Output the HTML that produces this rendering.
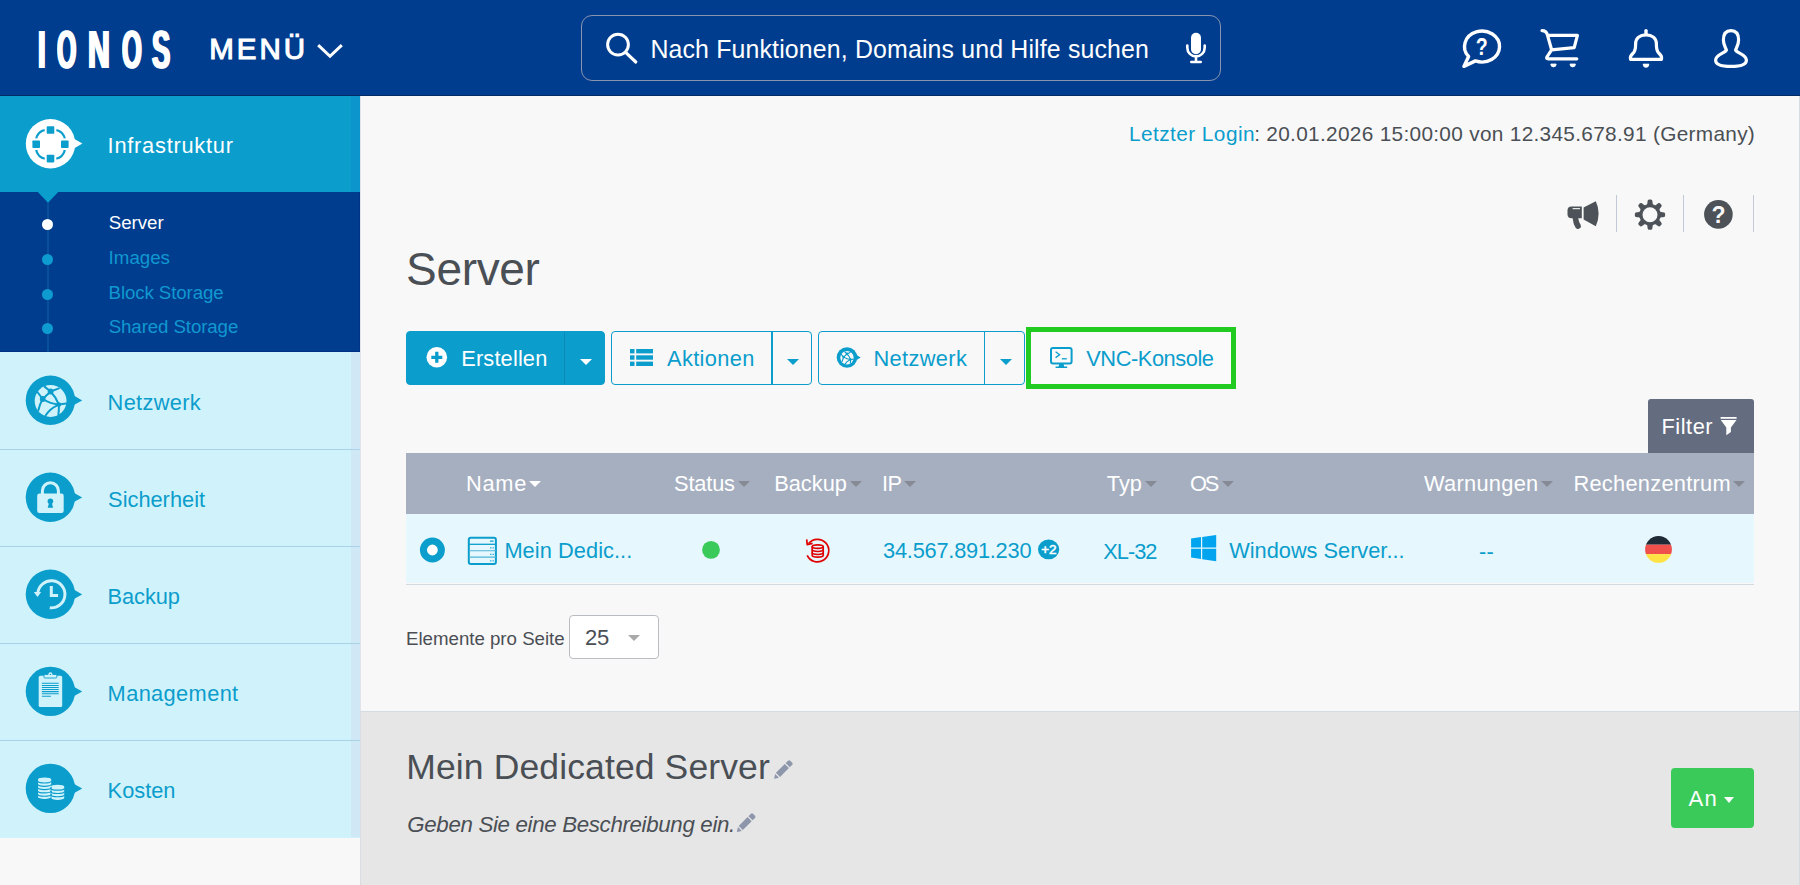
<!DOCTYPE html>
<html lang="de"><head><meta charset="utf-8"><title>IONOS Cloud Panel – Server</title>
<style>
*{box-sizing:border-box;margin:0;padding:0}
html,body{width:1800px;height:885px;overflow:hidden;background:#f8f8f8;font-family:"Liberation Sans",sans-serif}
.abs{position:absolute}
.t{position:absolute;white-space:nowrap;line-height:1;font-family:"Liberation Sans",sans-serif}
svg{position:absolute;overflow:visible}
#hdr{position:absolute;left:0;top:0;width:1800px;height:96px;background:#003d8f;border-bottom:1px solid #002a66}
#search{position:absolute;left:581px;top:15px;width:640px;height:66px;border:1px solid #8994b0;border-radius:11px}
#side{position:absolute;left:0;top:96px;width:360px;height:742px;background:#d0f3fb}
#side .strip{position:absolute;left:351px;top:0;width:9px;height:741px;background:#d0e8f6}
#act{position:absolute;left:0;top:0;width:360px;height:96px;background:#0b9dcc}
#act .st{position:absolute;left:351px;top:0;width:9px;height:96px;background:#0c94cc}
#sub{position:absolute;left:0;top:96px;width:360px;height:160px;background:#003d8f;border-bottom:1px solid #002f86;border-right:1px solid #00338a}
#sub .ln{position:absolute;left:47px;top:8px;width:2px;height:152px;background:#08509a}
#sub .dot{position:absolute;left:42px;width:11px;height:11px;border-radius:50%;background:#0e9bd0}
.sep{position:absolute;left:0;width:360px;height:1px;background:#a9d1e8}
#main{position:absolute;left:360px;top:96px;width:1440px;height:789px;background:#f8f8f8;border-left:1px solid #e0e3e7}
#redge{position:absolute;left:1799px;top:96px;width:1px;height:789px;background:#d5dbe0}
.vsep{position:absolute;top:195px;width:1px;height:37px;background:#c2cad8}
.btn{position:absolute;top:331px;height:54px;border:1.5px solid #0b9dcc;border-radius:4px}
#bt1{left:406px;width:199px;background:#0b9dcc}
#bt1 i{position:absolute;left:157px;top:0;bottom:0;width:1px;background:#0a8ab5}
#bt2{left:611px;width:201px}
#bt2 i{position:absolute;left:159px;top:0;bottom:0;width:2px;background:#0b9dcc}
#bt3{left:818px;width:207px}
#bt3 i{position:absolute;left:165px;top:0;bottom:0;width:1px;background:#0b9dcc}
#vnc{position:absolute;left:1026px;top:327px;width:210px;height:62px;border:5px solid #22cb22;background:#fafafa}
.car{position:absolute;width:0;height:0;border-left:6px solid transparent;border-right:6px solid transparent;border-top:6px solid #0b9dcc}
#filter{position:absolute;left:1648px;top:399px;width:106px;height:54px;background:#646c80;border-radius:3px 3px 0 0}
#thead{position:absolute;left:406px;top:453px;width:1348px;height:61px;background:#a6afc0}
#trow{position:absolute;left:406px;top:514px;width:1348px;height:69px;background:#e6f8fd}
#trowl{position:absolute;left:406px;top:584px;width:1348px;height:1px;background:#d3d9e0}
.hc{position:absolute;top:480.8px;width:0;height:0;border-left:6.4px solid transparent;border-right:6.4px solid transparent;border-top:6.8px solid #858a94}
#sel{position:absolute;left:569px;top:615px;width:90px;height:44px;background:#fff;border:1px solid #b9bcc1;border-radius:4px}
#detail{position:absolute;left:360px;top:711px;width:1439px;border-left:1px solid #d9dde2;height:174px;background:#e6e6e6;border-top:1.5px solid #d3dbe3}
#anb{position:absolute;left:1671px;top:768px;width:83px;height:60px;background:#3aca5a;border-radius:4px}
#logo{position:absolute;left:0;top:22.5px;height:54px;width:200px;font-family:"Liberation Sans",sans-serif;font-weight:bold;font-size:54.5px;line-height:1;color:#fff}
#logo span{position:absolute;top:0;transform-origin:0 0;text-shadow:2px 0 #fff,-2px 0 #fff}

</style></head>
<body>
<main id="main"></main>
<div id="redge"></div>
<header id="hdr">
  <div id="search"></div>
</header>
<div id="logo"><span style="left:38px;transform:scaleX(.5)">I</span><span style="left:57px;transform:scaleX(.455)">O</span><span style="left:88px;transform:scaleX(.555)">N</span><span style="left:121.5px;transform:scaleX(.466)">O</span><span style="left:151.5px;transform:scaleX(.5)">S</span></div>

<nav id="side">
  <div class="strip"></div>
  <div id="act"><div class="st"></div></div>
  <div id="sub">
    <div class="ln"></div>
    <div class="dot" style="top:27px;background:#fff"></div>
    <div class="dot" style="top:62px"></div>
    <div class="dot" style="top:96.5px"></div>
    <div class="dot" style="top:130.5px"></div>
  </div>
  <div class="sep" style="top:353px"></div>
  <div class="sep" style="top:450px"></div>
  <div class="sep" style="top:547px"></div>
  <div class="sep" style="top:644px"></div>
</nav>

<div class="vsep" style="left:1616px"></div>
<div class="vsep" style="left:1683px"></div>
<div class="vsep" style="left:1753px"></div>

<div class="btn" id="bt1"><i></i></div>
<div class="btn" id="bt2"><i></i></div>
<div class="btn" id="bt3"><i></i></div>
<div id="vnc"></div>
<div class="car" style="left:580px;top:358.5px;border-top-color:#fff"></div>
<div class="car" style="left:787px;top:358.5px"></div>
<div class="car" style="left:1000px;top:358.5px"></div>

<div id="filter"></div>
<div id="thead"></div>
<div id="trow"></div><div id="trowl"></div>
<div class="hc" style="left:529.3px;border-top-color:#fff"></div>
<div class="hc" style="left:738.1px"></div>
<div class="hc" style="left:849.6px"></div>
<div class="hc" style="left:904.4px"></div>
<div class="hc" style="left:1144.8px"></div>
<div class="hc" style="left:1221.8px"></div>
<div class="hc" style="left:1540.6px"></div>
<div class="hc" style="left:1732.9px"></div>

<div id="sel"></div>
<div class="hc" style="left:627.9px;top:634.5px;border-top-color:#a9a9a9"></div>
<div id="detail"></div>
<div id="anb"></div>
<div class="hc" style="left:1723.7px;top:797.1px;border-top-color:#fff;border-top-width:6px;border-left-width:5.9px;border-right-width:5.9px"></div>
<svg id="ico" width="1800" height="885" viewBox="0 0 1800 885" style="left:0;top:0">
<!-- header: chevron -->
<polyline points="318.2,45.2 330,56.3 341.8,45.2" fill="none" stroke="#fff" stroke-width="3"/>
<!-- search -->
<circle cx="618" cy="44.6" r="10.4" fill="none" stroke="#fff" stroke-width="3"/>
<line x1="625.6" y1="52.4" x2="635.8" y2="62" stroke="#fff" stroke-width="3.2" stroke-linecap="round"/>
<!-- mic -->
<rect x="1191" y="32.8" width="10" height="21.5" rx="5" fill="#fff"/>
<path d="M1187.3 45.5v2.2a8.7 8.7 0 0 0 17.4 0v-2.2" fill="none" stroke="#fff" stroke-width="2.6" stroke-linecap="round"/>
<line x1="1196" y1="56" x2="1196" y2="61.5" stroke="#fff" stroke-width="2.6"/>
<line x1="1191.3" y1="62" x2="1200.7" y2="62" stroke="#fff" stroke-width="2.6" stroke-linecap="round"/>
<!-- help bubble -->
<path d="M1475.4 60.9A17.5 15.5 0 1 0 1468.6 56.5L1463.9 66.4Z" fill="none" stroke="#fff" stroke-width="3.4" stroke-linejoin="round"/>
<text transform="translate(1481.800 55.300) scale(.8 1)" text-anchor="middle" font-family="Liberation Sans, sans-serif" font-weight="bold" font-size="24.500" fill="#fff">?</text>
<!-- cart -->
<g fill="none" stroke="#fff" stroke-width="3.2" stroke-linecap="round" stroke-linejoin="round">
<path d="M1542 30.6C1545.2 30.6 1546.6 31.8 1547.4 34.8L1551.6 49.7"/>
<path d="M1548 35.3L1577.4 35.3L1574.2 47.6L1551.6 49.8L1546.9 57Q1546 58.8 1548.2 58.8L1576.8 58.8"/>
</g>
<path d="M1550.8 64a2.7 2.9 0 0 0 5.4 0z" fill="#fff" stroke="#fff" stroke-width=".8"/>
<path d="M1570 64a2.7 2.9 0 0 0 5.4 0z" fill="#fff" stroke="#fff" stroke-width=".8"/>
<!-- bell -->
<line x1="1646" y1="30.6" x2="1646" y2="34" stroke="#fff" stroke-width="3.4" stroke-linecap="round"/>
<path d="M1630.6 59.4L1661.4 59.4Q1662.4 56.4 1659 53.3C1656.2 50.6 1656.4 48 1656.4 44C1656.4 38 1652 34.8 1646 34.8C1640 34.8 1635.6 38 1635.6 44C1635.6 48 1635.8 50.6 1633 53.3Q1629.6 56.4 1630.6 59.4Z" fill="none" stroke="#fff" stroke-width="3.2" stroke-linejoin="round"/>
<path d="M1643 64a3 3.4 0 0 0 6 0z" fill="#fff" stroke="#fff" stroke-width=".6"/>
<!-- user -->
<path d="M1726.4 50.2C1725 53 1715.600 54.400 1715.600 60.200C1715.600 64.300 1722 66.400 1731 66.400C1740 66.400 1746.400 64.300 1746.400 60.200C1746.400 54.400 1737 53 1735.600 50.200C1736.200 47.600 1738.600 45 1738.600 40C1738.600 33.800 1735.600 30.600 1731 30.600C1726.400 30.600 1723.400 33.800 1723.400 40C1723.400 45 1725.800 47.600 1726.400 50.200Z" fill="none" stroke="#fff" stroke-width="3.2" stroke-linejoin="round"/>
</svg>
<svg id="ico2" width="1800" height="885" viewBox="0 0 1800 885" style="left:0;top:0">
<!-- Infrastruktur icon -->
<circle cx="50.5" cy="143.7" r="24.7" fill="#fff"/>
<polygon points="73.5,138.6 82.4,143.6 73.5,148.8" fill="#fff"/>
<rect x="36.2" y="130" width="28.6" height="28.6" rx="10" fill="none" stroke="#0b9dcc" stroke-width="2.1"/>
<g fill="#fff"><rect x="44.7" y="124.2" width="11.600" height="11.600"/><rect x="44.7" y="152.800" width="11.600" height="11.600"/><rect x="30.4" y="138.400" width="11.600" height="11.600"/><rect x="59" y="138.400" width="11.600" height="11.600"/></g>
<g fill="#0b9dcc"><rect x="46.7" y="126.2" width="7.6" height="7.6" rx=".8"/><rect x="46.7" y="154.8" width="7.6" height="7.6" rx=".8"/><rect x="32.4" y="140.4" width="7.6" height="7.6" rx=".8"/><rect x="61" y="140.4" width="7.6" height="7.6" rx=".8"/></g>
<!-- submenu pointer -->
<polygon points="37.800,192 58.200,192 48,202.800" fill="#0b9dcc"/>
<!-- Netzwerk icon -->
<g transform="translate(50.4 400.2)">
<circle r="24.7" fill="#0b9dcc"/><polygon points="23.4,-4.6 31.8,0.2 23.4,4.8" fill="#0b9dcc"/>
<circle cx=".2" cy=".8" r="15.9" fill="#d0f3fb"/>
<g fill="none" stroke="#0b9dcc" stroke-width="2" stroke-linecap="round">
<path d="M.2 -8.7L-7.7 -1.2"/><path d="M.2 -8.7L-5.6 -13.3"/><path d="M-7.7 -1.2L-13 -8.2"/><path d="M.2 -8.7L8.5 -11.8"/>
<path d="M-7.7 -1.2Q0 3.6 8.5 4.4"/><path d="M.2 -8.7Q5.6 -3 8.5 4.4"/><path d="M8.5 4.4L15.8 3.4"/><path d="M8.5 4.4Q8.6 10 8 14.4"/>
<path d="M-7.7 -1.2Q-11 4.6 -12 10"/><path d="M-5 15.6Q-.6 8.6 6.4 5.4"/>
</g>
<g fill="#0b9dcc"><circle cx=".2" cy="-8.7" r="2.9"/><circle cx="-7.7" cy="-1.2" r="2.9"/><circle cx="8.5" cy="4.4" r="2.3"/></g>
</g>
<!-- Sicherheit icon -->
<g transform="translate(50.4 497.3)">
<circle r="24.7" fill="#0b9dcc"/><polygon points="23.4,-4.6 31.8,0.2 23.4,4.8" fill="#0b9dcc"/>
<path d="M-8 -3.2v-3.3a8 8 0 0 1 16 0v3.3" fill="none" stroke="#d0f3fb" stroke-width="3"/>
<rect x="-13.2" y="-3.7" width="26.5" height="19.4" rx="2.2" fill="#d0f3fb"/>
<circle cx="0" cy="4" r="2.8" fill="#0b9dcc"/><polygon points="-1.2,5 1.2,5 2.7,10.4 -2.7,10.4" fill="#0b9dcc"/>
</g>
<!-- Backup icon -->
<g transform="translate(50.4 594.2)">
<circle r="24.7" fill="#0b9dcc"/><polygon points="23.4,-4.6 31.8,0.2 23.4,4.8" fill="#0b9dcc"/>
<path d="M-12.6 -1.2A13.6 13.6 0 1 1 -.6 13.6" fill="none" stroke="#d0f3fb" stroke-width="2.9"/>
<polygon points="-16.6,-2.2 -9.2,-2.2 -12.9,2.8" fill="#d0f3fb"/>
<path d="M.9 -8.3V1.2H7.7" fill="none" stroke="#d0f3fb" stroke-width="3"/>
</g>
<!-- Management icon -->
<g transform="translate(50.4 691.4)">
<circle r="24.7" fill="#0b9dcc"/><polygon points="23.4,-4.6 31.8,0.2 23.4,4.8" fill="#0b9dcc"/>
<rect x="-11.7" y="-15.6" width="23.5" height="31.2" rx="1.6" fill="#d0f3fb"/>
<rect x="-6.4" y="-17" width="12.8" height="3.6" rx=".8" fill="#d0f3fb" stroke="#0b9dcc" stroke-width=".9"/>
<circle cx="0" cy="-17.2" r="2" fill="#d0f3fb"/><circle cx="0" cy="-17" r=".7" fill="#0b9dcc"/>
<g stroke="#0b9dcc" stroke-width="1.05"><path d="M-8.5 -8.1h16.8M-8.5 -6h16.8M-8.5 -3.9h16.8M-8.5 -1.9h16.8M-8.5 .2h16.8M-8.5 2.3h16.8M-8.5 4.8h9"/></g>
</g>
<!-- Kosten icon -->
<g transform="translate(50.4 788.4)">
<circle r="24.7" fill="#0b9dcc"/><polygon points="23.4,-4.6 31.8,0.2 23.4,4.8" fill="#0b9dcc"/>
<g fill="#d0f3fb">
<path d="M-12.4 -9v17.6a6.6 1.9 0 0 0 13.2 0V-9z"/><ellipse cx="-5.8" cy="-9" rx="6.6" ry="1.9"/>
<path d="M.6 -1.8v11.4a6.6 1.9 0 0 0 13.2 0V-1.8z"/><ellipse cx="7.2" cy="-1.8" rx="6.6" ry="1.9"/>
</g>
<g fill="none" stroke="#0b9dcc" stroke-width="1.15">
<path d="M-12.6 -7.4a6.8 2 0 0 0 13.6 0M-12.6 -4.1a6.8 2 0 0 0 13.6 0M-12.6 -.8a6.8 2 0 0 0 13.6 0M-12.6 2.5a6.8 2 0 0 0 13.6 0M-12.6 5.8a6.8 2 0 0 0 13.6 0"/>
<path d="M.4 -.2a6.8 2 0 0 0 13.6 0M.4 3.1a6.8 2 0 0 0 13.6 0M.4 6.4a6.8 2 0 0 0 13.6 0"/>
<path d="M.6 -1.8V11" stroke-width=".9"/>
</g>
</g>
</svg>
<svg id="ico3" width="1800" height="885" viewBox="0 0 1800 885" style="left:0;top:0">
<!-- megaphone -->
<g fill="#4c5257">
<path d="M1571.5 206.6h10.3v11.6h-10.3a4 4 0 0 1-4-4v-3.6a4 4 0 0 1 4-4z"/>
<path d="M1583.6 207.4L1595.8 201.3Q1598.6 207 1598.6 213.6Q1598.6 220.5 1595.8 226.2L1583.6 219.6Z"/>
<path d="M1572.6 218h5.6q.6 4.200 2.300 6.600q1.200 2.300-.7 3.700q-2.200 1.500-4-.3q-2.600-3.800-3.200-10z"/>
</g>
<rect x="1572.600" y="208.100" width="7.400" height="1.100" fill="#f8f8f8"/>
<!-- gear -->
<path d="M1665.15 214.70L1665.13 215.29L1665.05 215.88L1664.83 216.45L1664.16 216.94L1662.65 217.22L1661.14 217.37L1660.46 217.65L1660.18 218.01L1660.00 218.39L1659.84 218.78L1659.68 219.16L1659.54 219.56L1659.48 220.01L1659.77 220.69L1660.73 221.87L1661.60 223.13L1661.73 223.94L1661.48 224.50L1661.12 224.98L1660.71 225.41L1660.28 225.82L1659.80 226.18L1659.24 226.43L1658.43 226.30L1657.17 225.43L1655.99 224.47L1655.31 224.18L1654.86 224.24L1654.46 224.38L1654.08 224.54L1653.69 224.70L1653.31 224.88L1652.95 225.16L1652.67 225.84L1652.52 227.35L1652.24 228.86L1651.75 229.53L1651.18 229.75L1650.59 229.83L1650.00 229.85L1649.41 229.83L1648.82 229.75L1648.25 229.53L1647.76 228.86L1647.48 227.35L1647.33 225.84L1647.05 225.16L1646.69 224.88L1646.31 224.70L1645.92 224.54L1645.54 224.38L1645.14 224.24L1644.69 224.18L1644.01 224.47L1642.83 225.43L1641.57 226.30L1640.76 226.43L1640.20 226.18L1639.72 225.82L1639.29 225.41L1638.88 224.98L1638.52 224.50L1638.27 223.94L1638.40 223.13L1639.27 221.87L1640.23 220.69L1640.52 220.01L1640.46 219.56L1640.32 219.16L1640.16 218.78L1640.00 218.39L1639.82 218.01L1639.54 217.65L1638.86 217.37L1637.35 217.22L1635.84 216.94L1635.17 216.45L1634.95 215.88L1634.87 215.29L1634.85 214.70L1634.87 214.11L1634.95 213.52L1635.17 212.95L1635.84 212.46L1637.35 212.18L1638.86 212.03L1639.54 211.75L1639.82 211.39L1640.00 211.01L1640.16 210.62L1640.32 210.24L1640.46 209.84L1640.52 209.39L1640.23 208.71L1639.27 207.53L1638.40 206.27L1638.27 205.46L1638.52 204.90L1638.88 204.42L1639.29 203.99L1639.72 203.58L1640.20 203.22L1640.76 202.97L1641.57 203.10L1642.83 203.97L1644.01 204.93L1644.69 205.22L1645.14 205.16L1645.54 205.02L1645.92 204.86L1646.31 204.70L1646.69 204.52L1647.05 204.24L1647.33 203.56L1647.48 202.05L1647.76 200.54L1648.25 199.87L1648.82 199.65L1649.41 199.57L1650.00 199.55L1650.59 199.57L1651.18 199.65L1651.75 199.87L1652.24 200.54L1652.52 202.05L1652.67 203.56L1652.95 204.24L1653.31 204.52L1653.69 204.70L1654.08 204.86L1654.46 205.02L1654.86 205.16L1655.31 205.22L1655.99 204.93L1657.17 203.97L1658.43 203.10L1659.24 202.97L1659.80 203.22L1660.28 203.58L1660.71 203.99L1661.12 204.42L1661.48 204.90L1661.73 205.46L1661.60 206.27L1660.73 207.53L1659.77 208.71L1659.48 209.39L1659.54 209.84L1659.68 210.24L1659.84 210.62L1660.00 211.01L1660.18 211.39L1660.46 211.75L1661.14 212.03L1662.65 212.18L1664.16 212.46L1664.83 212.95L1665.05 213.52L1665.13 214.11Z" fill="#4c5257"/>
<circle cx="1650" cy="214.700" r="7.500" fill="#f8f8f8"/>
<!-- help -->
<circle cx="1718.400" cy="214.400" r="14.300" fill="#4c5257"/>
<text x="1718.600" y="222.600" text-anchor="middle" font-family="Liberation Sans, sans-serif" font-weight="bold" font-size="23" fill="#f8f8f8">?</text>
<!-- plus -->
<circle cx="436.800" cy="357.300" r="10.300" fill="#fff"/>
<path d="M431.300 357.300h11M436.800 351.800v11" stroke="#0b9dcc" stroke-width="3.300"/>
<!-- list -->
<g fill="#0b9dcc"><rect x="630" y="349" width="4.500" height="4.400"/><rect x="636.200" y="349" width="16.800" height="4.400"/><rect x="630" y="355.300" width="4.500" height="4.400"/><rect x="636.200" y="355.300" width="16.800" height="4.400"/><rect x="630" y="361.600" width="4.500" height="4.400"/><rect x="636.200" y="361.600" width="16.800" height="4.400"/></g>
<!-- net mini -->
<g transform="translate(847 357.500)">
<circle r="10.300" fill="#0b9dcc"/><polygon points="9.600,-2.400 13.600,0 9.600,2.400" fill="#0b9dcc"/>
<circle cx="0" cy=".200" r="6.700" fill="#f8f8f8"/>
<g fill="none" stroke="#0b9dcc" stroke-width="1.100"><path d="M0 -3.600L-3.400 -.4M0 -3.600L-2.400 -6M-3.400 -.4L-6 -3.400M0 -3.600L3.600 -5.200M-3.400 -.4Q0 1.600 3.600 2M0 -3.600Q2.400 -1.200 3.600 2M3.600 2L6.600 1.600M3.600 2L3.400 6M-3.400 -.4L-5 4.200M-2 6.600Q-.2 3.600 2.800 2.400"/></g>
<g fill="#0b9dcc"><circle cx="0" cy="-3.600" r="1.300"/><circle cx="-3.400" cy="-.4" r="1.300"/><circle cx="3.600" cy="2" r="1.100"/></g>
</g>
<!-- monitor -->
<rect x="1051" y="348" width="20.600" height="15.400" rx="2" fill="none" stroke="#0b9dcc" stroke-width="2"/>
<path d="M1055.600 351.800l4 2.900l-4 2.900" fill="none" stroke="#0b9dcc" stroke-width="1.300"/><path d="M1061.800 358.800h5" stroke="#0b9dcc" stroke-width="1.300"/>
<path d="M1059.200 364h4.400l.6 2.600h3v1.500h-11.600v-1.500h3z" fill="#0b9dcc"/>
<!-- funnel -->
<path d="M1720.600 416.900h16v1.800h-16zM1720.800 419.900h15.700l-5.600 7.700v4.500l-4.600 3.100v-7.600z" fill="#fff"/>
<!-- radio -->
<circle cx="432.400" cy="550" r="8.950" fill="#fff" stroke="#0b9dcc" stroke-width="7.100"/>
<!-- server icon -->
<rect x="468.800" y="537.700" width="27.100" height="26.400" rx="2" fill="none" stroke="#0b9dcc" stroke-width="2"/>
<path d="M469 544.300h27" stroke="#0b9dcc" stroke-width="1.300"/><path d="M469 550.800h27M469 557.100h27" stroke="#4fb4d8" stroke-width="1.100"/>
<path d="M490 541.200h3.600M490.200 547.800h1.200M492.600 547.800h1.200M490.200 554.300h1.200M492.600 554.300h1.200M490.200 560.900h1.200M492.600 560.900h1.200" stroke="#0b9dcc" stroke-width="1.200"/>
<!-- status dot -->
<circle cx="711" cy="549.900" r="8.900" fill="#3aca5a"/>
<!-- red backup -->
<g fill="none" stroke="#e00000" stroke-width="1.700">
<path d="M808.600 543.600A11.300 11.300 0 1 1 807.200 555.300"/>
<path d="M806.700 539.400L807.200 544.600L812.600 543.300" stroke-linejoin="round"/>
<path d="M812.200 546.600v8.600a5.500 1.900 0 0 0 11 0v-8.600"/>
<ellipse cx="817.700" cy="546.600" rx="5.500" ry="1.800"/>
<path d="M812.200 549.600a5.500 1.900 0 0 0 11 0M812.200 552.500a5.500 1.900 0 0 0 11 0" stroke-width="1.500"/>
</g>
<!-- +2 badge -->
<ellipse cx="1048.600" cy="549.400" rx="10.600" ry="9.900" fill="#0b9dcc"/>
<text x="1048.900" y="553.900" text-anchor="middle" font-family="Liberation Sans, sans-serif" font-size="13.500" stroke="#fff" stroke-width=".55" fill="#fff">+2</text>
<!-- windows -->
<g fill="#00a4ef">
<polygon points="1191.100,538.500 1201,537.100 1201,547.500 1191.100,547.500"/>
<polygon points="1202.200,536.900 1216.200,535 1216.200,547.500 1202.200,547.500"/>
<polygon points="1191.100,548.700 1201,548.700 1201,559 1191.100,557.600"/>
<polygon points="1202.200,548.700 1216.200,548.700 1216.200,561.200 1202.200,559.200"/>
</g>
<!-- flag -->
<clipPath id="fc"><circle cx="1658.500" cy="549.400" r="13.400"/></clipPath>
<g clip-path="url(#fc)"><rect x="1644" y="535" width="30" height="9.700" fill="#1e2a36"/><rect x="1644" y="544.700" width="30" height="9.400" fill="#f0504c"/><rect x="1644" y="554.100" width="30" height="10" fill="#ffe345"/></g>
<!-- pencils -->
<g fill="#8e96ab">
<path d="M774.10 778.80L775.12 773.88L779.02 777.78ZM775.94 772.86L784.78 764.02L788.88 768.12L780.04 776.96ZM785.70 763.10L788.10 760.70Q789.16 759.64 790.22 760.70L792.20 762.68Q793.26 763.74 792.20 764.80L789.80 767.20Z"/>
<path d="M736.90 831.90L737.92 826.98L741.82 830.88ZM738.74 825.96L747.58 817.12L751.68 821.22L742.84 830.06ZM748.50 816.20L750.90 813.80Q751.96 812.74 753.02 813.80L755.00 815.78Q756.06 816.84 755.00 817.90L752.60 820.30Z"/>
</g>
</svg>

<div id="texts">
<span class="t" id="menu" style="left:209.20px;top:33.53px;font-size:29.5px;letter-spacing:2.980px;color:#fff;-webkit-text-stroke:1.1px #fff;">MENÜ</span>
<span class="t" id="srch" style="left:650.41px;top:37.12px;font-size:24.9px;letter-spacing:0.149px;color:#fff;">Nach Funktionen, Domains und Hilfe suchen</span>
<span class="t" id="infra" style="left:107.62px;top:135.45px;font-size:21.8px;letter-spacing:0.753px;color:#fff;">Infrastruktur</span>
<span class="t" id="s1" style="left:108.73px;top:214.27px;font-size:18.7px;letter-spacing:-0.021px;color:#fff;">Server</span>
<span class="t" id="s2" style="left:108.62px;top:249.17px;font-size:18.7px;letter-spacing:0.015px;color:#1098d0;">Images</span>
<span class="t" id="s3" style="left:108.62px;top:284.07px;font-size:18.7px;letter-spacing:-0.113px;color:#1098d0;">Block Storage</span>
<span class="t" id="s4" style="left:108.73px;top:318.17px;font-size:18.7px;letter-spacing:-0.101px;color:#1098d0;">Shared Storage</span>
<span class="t" id="n1" style="left:107.62px;top:392.25px;font-size:21.8px;letter-spacing:0.316px;color:#0b9dcc;">Netzwerk</span>
<span class="t" id="n2" style="left:108.10px;top:489.15px;font-size:21.8px;letter-spacing:0.001px;color:#0b9dcc;">Sicherheit</span>
<span class="t" id="n3" style="left:107.46px;top:586.15px;font-size:21.8px;letter-spacing:-0.044px;color:#0b9dcc;">Backup</span>
<span class="t" id="n4" style="left:107.62px;top:683.15px;font-size:21.8px;letter-spacing:0.371px;color:#0b9dcc;">Management</span>
<span class="t" id="n5" style="left:107.62px;top:780.25px;font-size:21.8px;letter-spacing:-0.009px;color:#0b9dcc;">Kosten</span>
<span class="t" id="ll1" style="left:1128.94px;top:123.79px;font-size:20.8px;letter-spacing:0.446px;color:#0b9dcc;">Letzter Login</span>
<span class="t" id="ll2" style="left:1254.20px;top:123.79px;font-size:20.8px;letter-spacing:0.312px;color:#4a4f55;">: 20.01.2026 15:00:00 von 12.345.678.91 (Germany)</span>
<span class="t" id="h1" style="left:406.09px;top:245.76px;font-size:46px;letter-spacing:-0.339px;color:#4a4f55;">Server</span>
<span class="t" id="b1" style="left:461.25px;top:347.55px;font-size:21.8px;letter-spacing:0.152px;color:#fff;">Erstellen</span>
<span class="t" id="b2" style="left:667.00px;top:348.35px;font-size:21.8px;letter-spacing:0.364px;color:#0b9dcc;">Aktionen</span>
<span class="t" id="b3" style="left:873.41px;top:348.35px;font-size:21.8px;letter-spacing:0.367px;color:#0b9dcc;">Netzwerk</span>
<span class="t" id="b4" style="left:1086.21px;top:348.25px;font-size:21.8px;letter-spacing:-0.428px;color:#0b9dcc;">VNC-Konsole</span>
<span class="t" id="flt" style="left:1661.46px;top:415.65px;font-size:21.8px;letter-spacing:0.539px;color:#fff;">Filter</span>
<span class="t" id="th1" style="left:466.04px;top:472.55px;font-size:21.8px;letter-spacing:0.722px;color:#fff;">Name</span>
<span class="t" id="th2" style="left:674.10px;top:472.55px;font-size:21.8px;letter-spacing:-0.182px;color:#fff;">Status</span>
<span class="t" id="th3" style="left:774.20px;top:472.55px;font-size:21.8px;letter-spacing:0.013px;color:#fff;">Backup</span>
<span class="t" id="th4" style="left:882.04px;top:472.55px;font-size:21.8px;letter-spacing:-0.673px;color:#fff;">IP</span>
<span class="t" id="th5" style="left:1106.84px;top:472.55px;font-size:21.8px;letter-spacing:-0.022px;color:#fff;">Typ</span>
<span class="t" id="th6" style="left:1189.94px;top:472.55px;font-size:21.8px;letter-spacing:-2.018px;color:#fff;">OS</span>
<span class="t" id="th7" style="left:1424.00px;top:472.55px;font-size:21.8px;letter-spacing:0.295px;color:#fff;">Warnungen</span>
<span class="t" id="th8" style="left:1573.41px;top:472.55px;font-size:21.8px;letter-spacing:0.280px;color:#fff;">Rechenzentrum</span>
<span class="t" id="td1" style="left:504.41px;top:540.45px;font-size:21.8px;letter-spacing:0.055px;color:#0b9dcc;">Mein Dedic...</span>
<span class="t" id="td2" style="left:883.10px;top:540.15px;font-size:21.8px;letter-spacing:-0.239px;color:#0b9dcc;">34.567.891.230</span>
<span class="t" id="td3" style="left:1103.26px;top:541.15px;font-size:21.8px;letter-spacing:-0.986px;color:#0b9dcc;">XL-32</span>
<span class="t" id="td4" style="left:1229.21px;top:540.15px;font-size:21.8px;letter-spacing:-0.021px;color:#0b9dcc;">Windows Server...</span>
<span class="t" id="td5" style="left:1479.10px;top:541.15px;font-size:21.8px;letter-spacing:0.106px;color:#0b9dcc;">--</span>
<span class="t" id="pp" style="left:405.99px;top:629.87px;font-size:18.7px;letter-spacing:-0.015px;color:#4a4f55;">Elemente pro Seite</span>
<span class="t" id="pp2" style="left:585.10px;top:627.08px;font-size:22px;letter-spacing:-0.302px;color:#4a4f55;">25</span>
<span class="t" id="h2" style="left:406.30px;top:749.75px;font-size:35.5px;letter-spacing:0.120px;color:#4a4f55;">Mein Dedicated Server</span>
<span class="t" id="desc" style="left:407.31px;top:814.02px;font-size:22.3px;letter-spacing:-0.336px;color:#4a4f55;font-style:italic;">Geben Sie eine Beschreibung ein.</span>
<span class="t" id="an" style="left:1688.47px;top:788.38px;font-size:22px;letter-spacing:1.319px;color:#fff;">An</span>
</div>
</body></html>
